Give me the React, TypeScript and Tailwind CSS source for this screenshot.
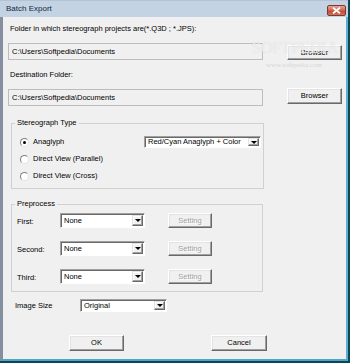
import React from "react";

function Btn({ children, className = "", disabled = false }: { children: React.ReactNode; className?: string; disabled?: boolean }) {
  return (
    <div
      className={`flex items-center justify-center bg-[#f0f0f0] border border-t-white border-l-white border-r-[#696969] border-b-[#696969] shadow-[inset_-1px_-1px_0_#a0a0a0,inset_1px_1px_0_#e3e3e3] ${
        disabled ? "text-[#a0a0a0] [text-shadow:1px_1px_0_#ffffff]" : "text-black"
      } ${className}`}
    >
      {children}
    </div>
  );
}

function Arrow() {
  return (
    <div className="w-[11px] flex items-center justify-center bg-[#f0f0f0] border border-t-[#e3e3e3] border-l-[#e3e3e3] border-r-[#696969] border-b-[#696969] shadow-[inset_-1px_-1px_0_#a0a0a0,inset_1px_1px_0_#ffffff]">
      <div className="w-0 h-0 border-l-[3px] border-r-[3px] border-t-[3px] border-l-transparent border-r-transparent border-t-black" />
    </div>
  );
}

function Select({ text, className = "" }: { text: string; className?: string }) {
  return (
    <div
      className={`flex items-stretch bg-white border border-t-[#a0a0a0] border-l-[#a0a0a0] border-r-white border-b-white shadow-[inset_1px_1px_0_#696969] ${className}`}
    >
      <div className="flex-1 pl-[3px] flex items-center overflow-hidden whitespace-nowrap">{text}</div>
      <div className="flex items-stretch p-[1px]">
        <Arrow />
      </div>
    </div>
  );
}

function Radio({ checked, label }: { checked?: boolean; label: string }) {
  return (
    <div className="flex items-center h-[12px]">
      <div className="ml-[8px] w-[9px] h-[9px] rounded-full bg-white border border-t-[#808080] border-l-[#808080] border-r-[#e3e3e3] border-b-[#e3e3e3] flex items-center justify-center">
        {checked && <div className="w-[3px] h-[3px] rounded-full bg-black" />}
      </div>
      <div className="ml-[4px] whitespace-nowrap">{label}</div>
    </div>
  );
}

function Field({ text }: { text: string }) {
  return (
    <div className="w-[255px] h-[17px] flex items-center pl-[3px] bg-[#f0f0f0] border border-[#bdbdbd] whitespace-nowrap">
      {text}
    </div>
  );
}

export default function App() {
  return (
    <div className="relative w-[350px] h-[363px] bg-[#0c4754] overflow-hidden font-['Liberation_Sans',Arial,sans-serif] text-[7.5px] leading-[10px] text-black">
      <div className="w-[348px] h-[361px] flex flex-col">
        {/* Title bar */}
        <div className="h-[17px] flex items-center bg-[#c4d3e4] border-t border-[#b3c3d5]">
          <div className="ml-[6px] text-[8px] text-[#15273d]">Batch Export</div>
          <div className="ml-auto mr-[2px] mt-[3px] w-[19px] h-[11px] rounded-[2px] border border-[#7a3a32] bg-[linear-gradient(#e8a497,#d0604c_50%,#c0412d_51%,#d3735e)] flex items-center justify-center">
            <svg width="9" height="7" viewBox="0 0 9 7">
              <path d="M1 0.8 L8 6.2 M8 0.8 L1 6.2" stroke="#ffffff" strokeWidth="1.8" />
            </svg>
          </div>
        </div>
        {/* Body */}
        <div className="flex-1 flex flex-col bg-[#f0f0f0] border-l-[3px] border-l-[#8490a0] border-r-[2px] border-r-[#5ab0d4] border-b-[2px] border-b-[#4fa6c8]">
          <div className="mt-[7px] ml-[7px] whitespace-nowrap">Folder in which stereograph projects are(*.Q3D ; *.JPS):</div>
          <div className="mt-[9px] ml-[5px] flex items-start">
            <Field text="C:\Users\Softpedia\Documents" />
            <Btn className="ml-[24px] mt-[2px] w-[55px] h-[15px]">Browser</Btn>
          </div>
          <div className="mt-[10px] ml-[7px] whitespace-nowrap">Destination Folder:</div>
          <div className="mt-[9px] ml-[5px] flex items-start">
            <Field text="C:\Users\Softpedia\Documents" />
            <Btn className="ml-[24px] mt-[-1px] w-[55px] h-[16px]">Browser</Btn>
          </div>

          {/* Stereograph Type */}
          <fieldset className="mt-[12px] ml-[8px] w-[253px] border border-[#d0d0d0] pb-[6px]">
            <legend className="ml-[3px] px-[2px] leading-[10px]">Stereograph Type</legend>
            <div className="mt-[8px] flex flex-col gap-[5px]">
              <div className="flex items-center h-[12px]">
                <Radio checked label="Anaglyph" />
                <Select text="Red/Cyan Anaglyph + Color" className="ml-auto mr-[2px] w-[117px] h-[12px]" />
              </div>
              <Radio label="Direct View (Parallel)" />
              <Radio label="Direct View (Cross)" />
            </div>
          </fieldset>

          {/* Preprocess */}
          <fieldset className="mt-[10px] ml-[8px] w-[252px] border border-[#d0d0d0] pb-[7px]">
            <legend className="ml-[3px] px-[2px] leading-[10px]">Preprocess</legend>
            <div className="mt-[4px] flex flex-col gap-[13px]">
              {["First:", "Second:", "Third:"].map((l) => (
                <div key={l} className="flex items-center h-[15px]">
                  <div className="ml-[5px] w-[43px] mt-[2px]">{l}</div>
                  <Select text="None" className="w-[85px] h-[15px]" />
                  <Btn disabled className="ml-[23px] w-[44px] h-[15px]">Setting</Btn>
                </div>
              ))}
            </div>
          </fieldset>

          <div className="mt-[7px] flex items-center h-[13px]">
            <div className="ml-[12px] w-[65px]">Image Size</div>
            <Select text="Original" className="w-[87px] h-[13px]" />
          </div>

          <div className="mt-[23px] flex">
            <Btn className="ml-[66px] w-[55px] h-[16px]">OK</Btn>
            <Btn className="ml-[87px] w-[56px] h-[16px]">Cancel</Btn>
          </div>
        </div>
      </div>

      {/* Softpedia watermark */}
      <div className="absolute left-[252px] top-[40px] font-['Liberation_Serif',serif] text-[16px] leading-[16px] text-white/60 [text-shadow:0_0_1px_#d0d0d0] pointer-events-none">
        SOFTPEDIA
      </div>
      <div className="absolute left-[266px] top-[61px] font-['Liberation_Serif',serif] text-[7px] leading-[8px] text-[#d6d6d6] pointer-events-none">
        www.softpedia.com
      </div>
    </div>
  );
}
